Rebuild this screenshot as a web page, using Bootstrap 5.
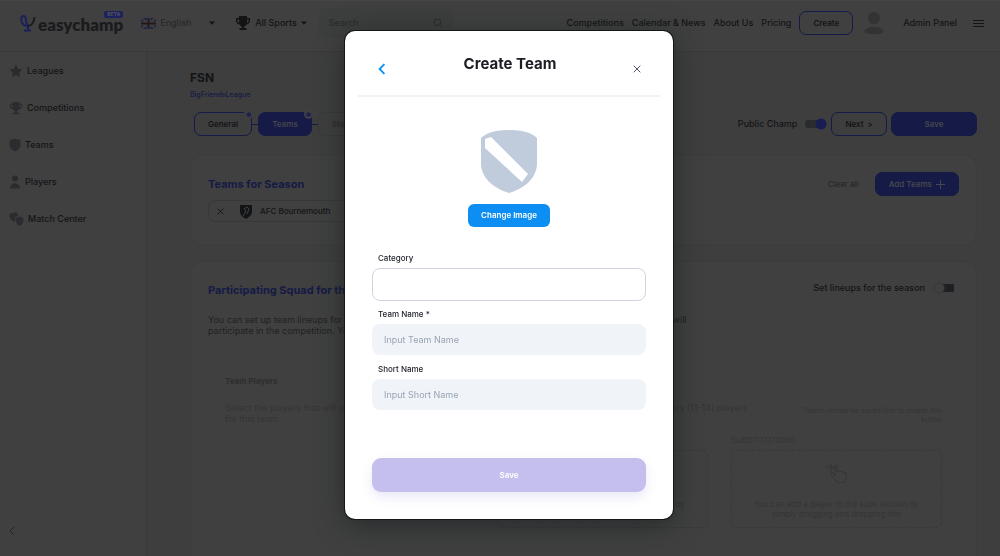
<!DOCTYPE html>
<html lang="en">
<head>
<meta charset="utf-8">
<meta name="viewport" content="width=device-width, initial-scale=1">
<title>Create Team</title>
<link href="https://cdn.jsdelivr.net/npm/bootstrap@5.3.0/dist/css/bootstrap.min.css" rel="stylesheet">
<style>
:root { --ink:#131416; --muted:#202226; --navy:#151a46; --ghost:#353535; --line:#393939; }
body { font-family:Inter,"Liberation Sans",sans-serif; font-size:9px; line-height:12px; font-weight:500; color:var(--ink); background:#3e3e3e; height:100vh; overflow:hidden; }
a { color:inherit; text-decoration:none; }
svg { display:block; flex:none; }
button, input { font-family:inherit; }
.topbar { height:52px; padding:0 16px 6px 20px; background:#404040; border-top:1px solid #464646; border-bottom:1px solid var(--line); }
.brand-text { font:800 17px/20px Lato,Inter,sans-serif; color:#1b1b1d; margin-left:2px; padding-top:3px; }
.beta { position:absolute; top:-1px; right:0; font-size:5px; line-height:7px; padding:0 3px; border-radius:2px; background:#1c2260; color:#55555c; font-weight:700; }
.plain { border:0; background:none; padding:0; color:inherit; font-size:9px; line-height:12px; font-weight:500; }
.lang { width:74px; color:#26282c; margin-left:18px; }
.searchbox { width:134px; height:30px; background:#3d3e3e; border-radius:6px; padding:0 10px; margin-left:12px; }
.searchbox input { background:none; border:0; outline:0; font-size:9px; width:100%; padding:0; }
.searchbox input::placeholder { color:#27292b; opacity:1; }
.btn-app { font-size:8px; line-height:12px; font-weight:600; border-radius:7px; padding:4px 13px; border:1px solid var(--navy); color:var(--ink); height:24px; white-space:nowrap; }
.btn-fill { background:var(--navy); color:#45464f; }
.side { width:147px; flex:none; background:#404040; border-right:1px solid var(--line); padding:13px 10px 20px 9px; }
.side a { height:37px; padding-bottom:25px; }
.side svg { color:#2b2c2f; }
.content { padding:19px 23px 0 43px; min-width:0; }
.content h1 { font-size:12px; line-height:14px; font-weight:700; margin:0; }
.league { font-size:7px; line-height:12px; color:var(--navy); }
.actions { margin-top:11px; }
.step { position:relative; }
.step .star { position:absolute; top:-4px; right:-2px; width:9px; height:10px; border-radius:50%; background:#404040; color:#181d54; font-size:13px; line-height:16px; text-align:center; font-weight:700; }
.joiner { width:6px; height:1px; background:var(--navy); }
.step-off { border-color:#383838; color:#2d2d2d; }
.toggle { appearance:none; width:22px; height:12px; margin:0; background:radial-gradient(circle at 16px 6px,#181d54 5px,transparent 6px),linear-gradient(#2a2b2e,#2a2b2e) 0 2px/20px 8px no-repeat; border-radius:6px; }
.toggle.off { background:radial-gradient(circle at 6px 6px,#404040 4px,#393939 5px,transparent 6px),linear-gradient(#1e1f23,#1e1f23) 6px 2px/15px 8px no-repeat; }
.pane { background:#404040; border:1px solid #3c3c3c; border-radius:12px; padding:16px 17px; }
.pane h2 { font-size:11px; line-height:16px; font-weight:700; color:var(--navy); margin:0; }
.pane-teams { margin-top:19px; height:90px; }
.chip { height:22px; width:150px; border:1px solid #383838; border-radius:7px; padding:0 8px; font-size:8px; }
.desc { font-size:9px; line-height:11px; font-weight:400; color:#202124; white-space:nowrap; }
.lineup { margin-top:39px; padding:0 17px; gap:23px; color:var(--ghost); font-weight:400; line-height:11px; }
.lineup strong { display:block; font-size:8px; line-height:12px; margin-bottom:15px; color:#2e2e2e; }
.lineup-head { height:60px; padding-top:27px; white-space:nowrap; }
.slot { width:211px; flex:none; }
.slot-name { font-size:8px; line-height:10px; height:15px; }
.drop { border:1px dashed #383838; border-radius:6px; height:78px; padding:12px 8px 0; font-size:8px; line-height:10px; }
.tiny { font-size:7px; line-height:9px; }
.modal { padding-left:18px; overflow:hidden; }
.modal-dialog { max-width:328px; margin:31px auto 0; }
.modal-content { border:0; border-radius:10px; padding:0 13px 27px; box-shadow:0 0 0 1px #161616,0 6px 28px rgba(20,28,28,.6); color:#1b1d22; }
.modal-header { border-bottom:2px solid #eff3f7; padding:11px 18px 0; height:66px; }
.modal-title { font-size:15px; line-height:20px; font-weight:700; padding-bottom:10px; }
.modal-body { padding:33px 14px 0; }
.btn-img { background:#0c8ef3; color:#fff; font-size:8px; line-height:15px; font-weight:600; border-radius:6px; padding:4px 13px; border:0; margin:11px 0 25px; }
.btn-img:hover { background:#087ad4; color:#fff; }
.form-label { display:block; font-size:8px; line-height:12px; font-weight:500; color:#22252e; margin:0 0 4px 6px; }
.form-control { height:31px; border:0; border-radius:8px; background:#f0f4f8; font-size:9px; padding:0 12px; margin-bottom:8px; }
.form-control::placeholder { color:#98a3b3; }
.form-control.outlined { height:33px; border:1px solid #d2d3e2; background:#fff; margin-bottom:7px; }
.btn-save { background:#c5bfee; color:#fff; font-size:8px; font-weight:600; height:34px; border:0; border-radius:9px; margin-top:40px; box-shadow:0 5px 11px rgba(120,115,220,.16); }
.btn-save:hover { background:#b5adea; color:#fff; }
</style>
</head>
<body class="d-flex flex-column">
<svg width="0" height="0" class="position-absolute" aria-hidden="true">
  <symbol id="cup" viewBox="0 0 16 16"><path fill="currentColor" d="M4 1h8v2h3v2c0 3-1.600 4.300-3.700 4.600C10.600 11 9.800 11.600 9 11.800V13h2.500v2h-7v-2H7v-1.200C6.200 11.600 5.400 11 4.700 9.600 2.600 9.300 1 8 1 5V3h3zm0 3.500H2.500C2.500 6.500 3 7.500 4.200 8zm8 0V8c1.200-.5 1.500-1.500 1.500-3.500z"/></symbol>
  <symbol id="shield" viewBox="0 0 16 16"><path fill="currentColor" d="M8 .5C10 1.300 12 2 14.300 2v6c0 4-3 6.300-6.300 7.500C4.700 14.300 1.700 12 1.700 8V2C4 2 6 1.300 8 .5z"/></symbol>
  <symbol id="caret" viewBox="0 0 6 4"><path fill="currentColor" d="M0 .5h6L3 3.800z"/></symbol>
  <symbol id="cross" viewBox="0 0 8 8"><path stroke="currentColor" d="M.7.7l6.600 6.600M7.300.7L.7 7.300"/></symbol>
  <symbol id="drag" viewBox="0 0 22 20"><path fill="none" stroke="currentColor" d="M5 0v9M0 4h9M3 2l4 4M9 13V3c0-1.500 2-1.500 2 0v6c0-2 3-2 3 0 0-1 3-1 3 1 0-1 3-1 3 1v4c0 6-8 6-10 3l-5-6c-1-2 1-3 2-2z"/></symbol>
</svg>

<header class="topbar d-flex align-items-center flex-shrink-0">
  <a href="#" class="d-flex align-items-center position-relative" aria-label="easychamp">
    <svg width="16" height="18" viewBox="0 0 16 18" fill="none" stroke-width="2"><path stroke="#1b2158" d="M7 12C3 12 1 8 1.200 5 1.400 1 5.400 1 5.800 5c.3 3 .4 5 2.200 7v4M4 16.500h7"/><path stroke="#1b1b1d" d="M8 12c4-.3 6-4 6.500-9"/></svg>
    <span class="brand-text">easychamp</span><span class="beta">BETA</span>
  </a>
  <button type="button" class="plain lang d-flex align-items-center gap-1">
    <svg width="15" height="11" viewBox="0 0 15 11"><path fill="#1a1f4a" d="M0 0h15v11H0z"/><path stroke="#404040" stroke-width="2" d="M0 0l15 11M15 0L0 11"/><path stroke="#404040" stroke-width="4" d="M7.500 0v11M0 5.500h15"/><path stroke="#25181c" stroke-width="2" d="M7.500 0v11M0 5.500h15"/></svg>
    <span class="flex-fill text-start">English</span>
    <svg width="6" height="4" color="#141414"><use href="#caret"/></svg>
  </button>
  <button type="button" class="plain d-flex align-items-center ms-3 ps-1 gap-1 text-nowrap">
    <svg width="16" height="16"><use href="#cup"/></svg><span>All Sports</span><svg width="6" height="4"><use href="#caret"/></svg>
  </button>
  <label class="searchbox d-flex align-items-center">
    <input type="search" placeholder="Search" aria-label="Search">
    <svg width="10" height="10" viewBox="0 0 10 10" fill="none" stroke="#27292b"><circle cx="4.300" cy="4.300" r="3.300"/><path d="M7 7l2.500 2.500"/></svg>
  </label>
  <nav class="d-flex align-items-center ms-auto gap-2 text-nowrap">
    <a href="#">Competitions</a><a href="#">Calendar &amp; News</a><a href="#">About Us</a><a href="#">Pricing</a>
  </nav>
  <button type="button" class="btn btn-app ms-2">Create</button>
  <svg class="ms-2 me-3" width="26" height="24" viewBox="0 0 26 24" fill="#333"><circle cx="13" cy="7" r="6"/><path d="M3 21c1-7 19-7 20 0-5 3-15 3-20 0z"/></svg>
  <a href="#" class="text-nowrap">Admin Panel</a>
  <button type="button" class="plain ms-3" aria-label="Menu"><svg width="11" height="9" viewBox="0 0 11 9" stroke="#131416"><path d="M0 1.500h11M0 4.500h11M0 7.500h11"/></svg></button>
</header>

<div class="d-flex flex-fill overflow-hidden">
  <nav class="side d-flex flex-column">
    <a href="#" class="d-flex align-items-center gap-1"><svg width="14" height="14" viewBox="0 0 14 14"><path fill="currentColor" d="M7 .5l2 4.300 4.700.6-3.500 3.200.9 4.700L7 11l-4.100 2.300.9-4.700L.3 5.400 5 4.800z"/></svg>Leagues</a>
    <a href="#" class="d-flex align-items-center gap-1"><svg width="14" height="14"><use href="#cup"/></svg>Competitions</a>
    <a href="#" class="d-flex align-items-center gap-1"><svg width="12" height="14" viewBox="1 0 14 16"><use href="#shield" width="16" height="16"/></svg>Teams</a>
    <a href="#" class="d-flex align-items-center gap-1"><svg width="12" height="14" viewBox="0 0 11 14" fill="currentColor"><circle cx="5.500" cy="3.500" r="3"/><path d="M.5 13.500c0-7 10-7 10 0z"/></svg>Players</a>
    <a href="#" class="d-flex align-items-center gap-1"><svg width="15" height="14" viewBox="0 0 14 14" fill="currentColor"><path d="M0 2l7-2 2 3-3 2-.5 5C2 9 0 6 0 2z"/><path d="M6.500 6L10 4.500 14 6c.3 4-1 6.500-4 8-3-1.500-4-4-3.500-8z"/></svg>Match Center</a>
    <button type="button" class="plain mt-auto" aria-label="Collapse"><svg width="6" height="10" viewBox="0 0 6 10" fill="none" stroke="#202226"><path d="M5 1L1 5l4 4"/></svg></button>
  </nav>

  <main class="content flex-fill">
    <h1>FSN</h1>
    <a href="#" class="league d-block mt-1">BigFriendsLeague</a>
    <div class="actions d-flex align-items-center">
      <div class="d-flex align-items-center ps-1">
        <button type="button" class="btn btn-app step">General<span class="star">*</span></button><span class="joiner"></span>
        <button type="button" class="btn btn-app btn-fill step">Teams<span class="star">*</span></button><span class="joiner"></span>
        <button type="button" class="btn btn-app step-off">Standings</button>
      </div>
      <label class="ms-auto me-2" for="public">Public Champ</label>
      <input type="checkbox" id="public" class="toggle me-1" checked>
      <button type="button" class="btn btn-app me-1">Next &nbsp;&gt;</button>
      <button type="button" class="btn btn-app btn-fill" style="width:86px">Save</button>
    </div>

    <section class="pane pane-teams">
      <div class="d-flex align-items-center justify-content-between" style="height:24px">
        <h2>Teams for Season</h2>
        <div class="d-flex align-items-center"><button type="button" class="plain me-3" style="color:#27282b;font-size:8px">Clear all</button>
        <button type="button" class="btn btn-app btn-fill d-flex align-items-center gap-1">Add Teams<svg width="9" height="9" stroke="currentColor"><path d="M4.500 0v9M0 4.500h9"/></svg></button></div>
      </div>
      <div class="chip d-flex align-items-center mt-1">
        <svg width="7" height="7" viewBox="0 0 8 8"><use href="#cross"/></svg>
        <svg class="ms-3" width="12" height="15" viewBox="0 0 12 15"><path fill="#131416" d="M0 1h12v7c0 3-3 5-6 7-3-2-6-4-6-7z"/><path fill="none" stroke="#404040" d="M3 12l3-5-2-2 3-2 2 2-2 5"/></svg>
        <span class="ms-2">AFC Bournemouth</span>
      </div>
    </section>

    <section class="pane mt-3" style="height:320px">
      <div class="d-flex align-items-center justify-content-between pe-1">
        <h2 class="pt-1">Participating Squad for the Season</h2>
        <div class="d-flex align-items-center gap-2"><label for="lineups">Set lineups for the season</label><input type="checkbox" id="lineups" class="toggle off"></div>
      </div>
      <p class="desc mt-3 mb-0">You can set up team lineups for the whole season at once here and then choose which of the eligible players will<br>participate in the competition. You can change them later.</p>
      <div class="lineup d-flex">
        <div class="flex-fill text-nowrap"><strong>Team Players</strong>Select the players that will play<br>for this team</div>
        <div class="slot">
          <div class="lineup-head d-flex justify-content-center ps-5">Drag and drop the starting lines of players (11-14) players</div>
          <div class="slot-name">STARTERS</div>
          <div class="drop text-center"><svg class="mx-auto mb-3" width="22" height="20"><use href="#drag"/></svg>You can add a player to the main section by<br>simply dragging and dropping him</div>
        </div>
        <div class="slot">
          <div class="lineup-head tiny text-end pt-0"><div style="padding-top:31px">Teams should be saved first to enable this<br>button</div></div>
          <div class="slot-name">SUBSTITUTIONS</div>
          <div class="drop text-center"><svg class="mx-auto mb-3" width="22" height="20"><use href="#drag"/></svg>You can add a player to the subs section by<br>simply dragging and dropping him</div>
        </div>
      </div>
    </section>
  </main>
</div>

<div class="modal show d-block" role="dialog" aria-modal="true" aria-labelledby="dlg">
  <div class="modal-dialog">
    <form class="modal-content">
      <div class="modal-header">
        <button type="button" class="plain" style="color:#0c8ef3" aria-label="Back"><svg width="12" height="12" viewBox="0 0 10 10" fill="none" stroke="currentColor" stroke-width="1.500"><path d="M7 1L3 5l4 4"/></svg></button>
        <h2 class="modal-title" id="dlg">Create Team</h2>
        <button type="button" class="plain" style="color:#4d5562" aria-label="Close"><svg width="10" height="8" viewBox="0 0 8 8"><use href="#cross"/></svg></button>
      </div>
      <div class="modal-body">
        <div class="d-flex flex-column align-items-center">
          <svg width="56" height="63" viewBox="0 0 56 63"><path fill="#c0ccdc" d="M0 8Q5 3 15 1 28-1 41 1 51 3 56 8v25c0 15-12 25-28 30C12 58 0 48 0 33z"/><path fill="#fff" d="M4 9l6-2 37 37-6 8L4 18z"/></svg>
          <button type="button" class="btn btn-img">Change Image</button>
        </div>
        <label class="form-label" for="cat">Category</label><input class="form-control outlined" id="cat">
        <label class="form-label" for="tn">Team Name *</label><input class="form-control" id="tn" placeholder="Input Team Name">
        <label class="form-label" for="sn">Short Name</label><input class="form-control" id="sn" placeholder="Input Short Name">
        <button type="submit" class="btn btn-save w-100">Save</button>
      </div>
    </form>
  </div>
</div>
<script src="https://cdn.jsdelivr.net/npm/bootstrap@5.3.0/dist/js/bootstrap.bundle.min.js"></script>
</body>
</html>
